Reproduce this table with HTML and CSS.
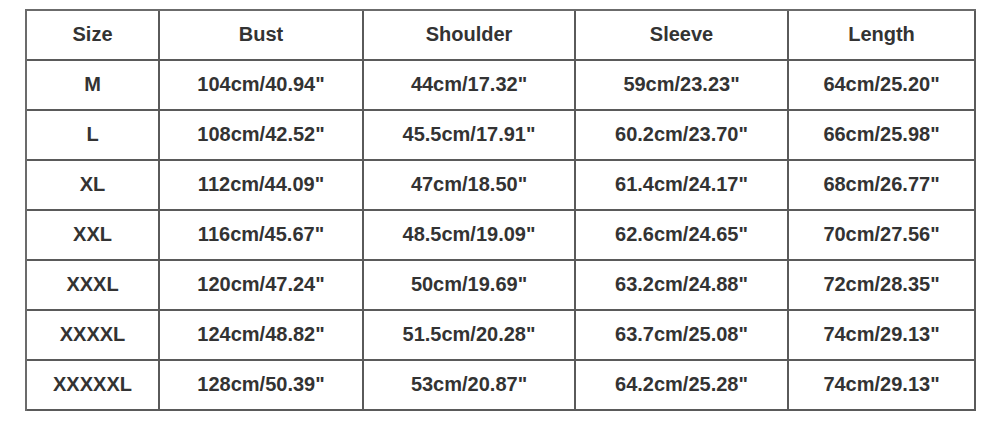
FILE: index.html
```html
<!DOCTYPE html>
<html>
<head>
<meta charset="utf-8">
<link rel="stylesheet" href="styles.css">
</head>
<body>
<div class="chart">
  <div class="cell head">Size</div><div class="cell head">Bust</div><div class="cell head">Shoulder</div><div class="cell head">Sleeve</div><div class="cell head">Length</div>
  <div class="cell">M</div><div class="cell">104cm/40.94"</div><div class="cell">44cm/17.32"</div><div class="cell">59cm/23.23"</div><div class="cell">64cm/25.20"</div>
  <div class="cell">L</div><div class="cell">108cm/42.52"</div><div class="cell">45.5cm/17.91"</div><div class="cell">60.2cm/23.70"</div><div class="cell">66cm/25.98"</div>
  <div class="cell">XL</div><div class="cell">112cm/44.09"</div><div class="cell">47cm/18.50"</div><div class="cell">61.4cm/24.17"</div><div class="cell">68cm/26.77"</div>
  <div class="cell">XXL</div><div class="cell">116cm/45.67"</div><div class="cell">48.5cm/19.09"</div><div class="cell">62.6cm/24.65"</div><div class="cell">70cm/27.56"</div>
  <div class="cell">XXXL</div><div class="cell">120cm/47.24"</div><div class="cell">50cm/19.69"</div><div class="cell">63.2cm/24.88"</div><div class="cell">72cm/28.35"</div>
  <div class="cell">XXXXL</div><div class="cell">124cm/48.82"</div><div class="cell">51.5cm/20.28"</div><div class="cell">63.7cm/25.08"</div><div class="cell">74cm/29.13"</div>
  <div class="cell">XXXXXL</div><div class="cell">128cm/50.39"</div><div class="cell">53cm/20.87"</div><div class="cell">64.2cm/25.28"</div><div class="cell">74cm/29.13"</div>
</div>
</body>
</html>
```
FILE: styles.css
```css
html, body {
  margin: 0;
  padding: 0;
  background: #ffffff;
}
body {
  padding: 9px 0 0 25px;
  font-family: "Liberation Sans", Arial, sans-serif;
}
.chart {
  display: grid;
  grid-template-columns: 133px 204px 212px 213px 187px;
  grid-auto-rows: 50px;
  width: max-content;
  border-left: 2px solid #6b6b6b;
  border-top: 2px solid #6b6b6b;
}
.cell {
  box-sizing: border-box;
  border-right: 2px solid #5a5a5a;
  border-bottom: 2px solid #5a5a5a;
  display: flex;
  align-items: center;
  justify-content: center;
  font-size: 20px;
  font-weight: bold;
  color: #333333;
  padding-bottom: 1px;
}
```
